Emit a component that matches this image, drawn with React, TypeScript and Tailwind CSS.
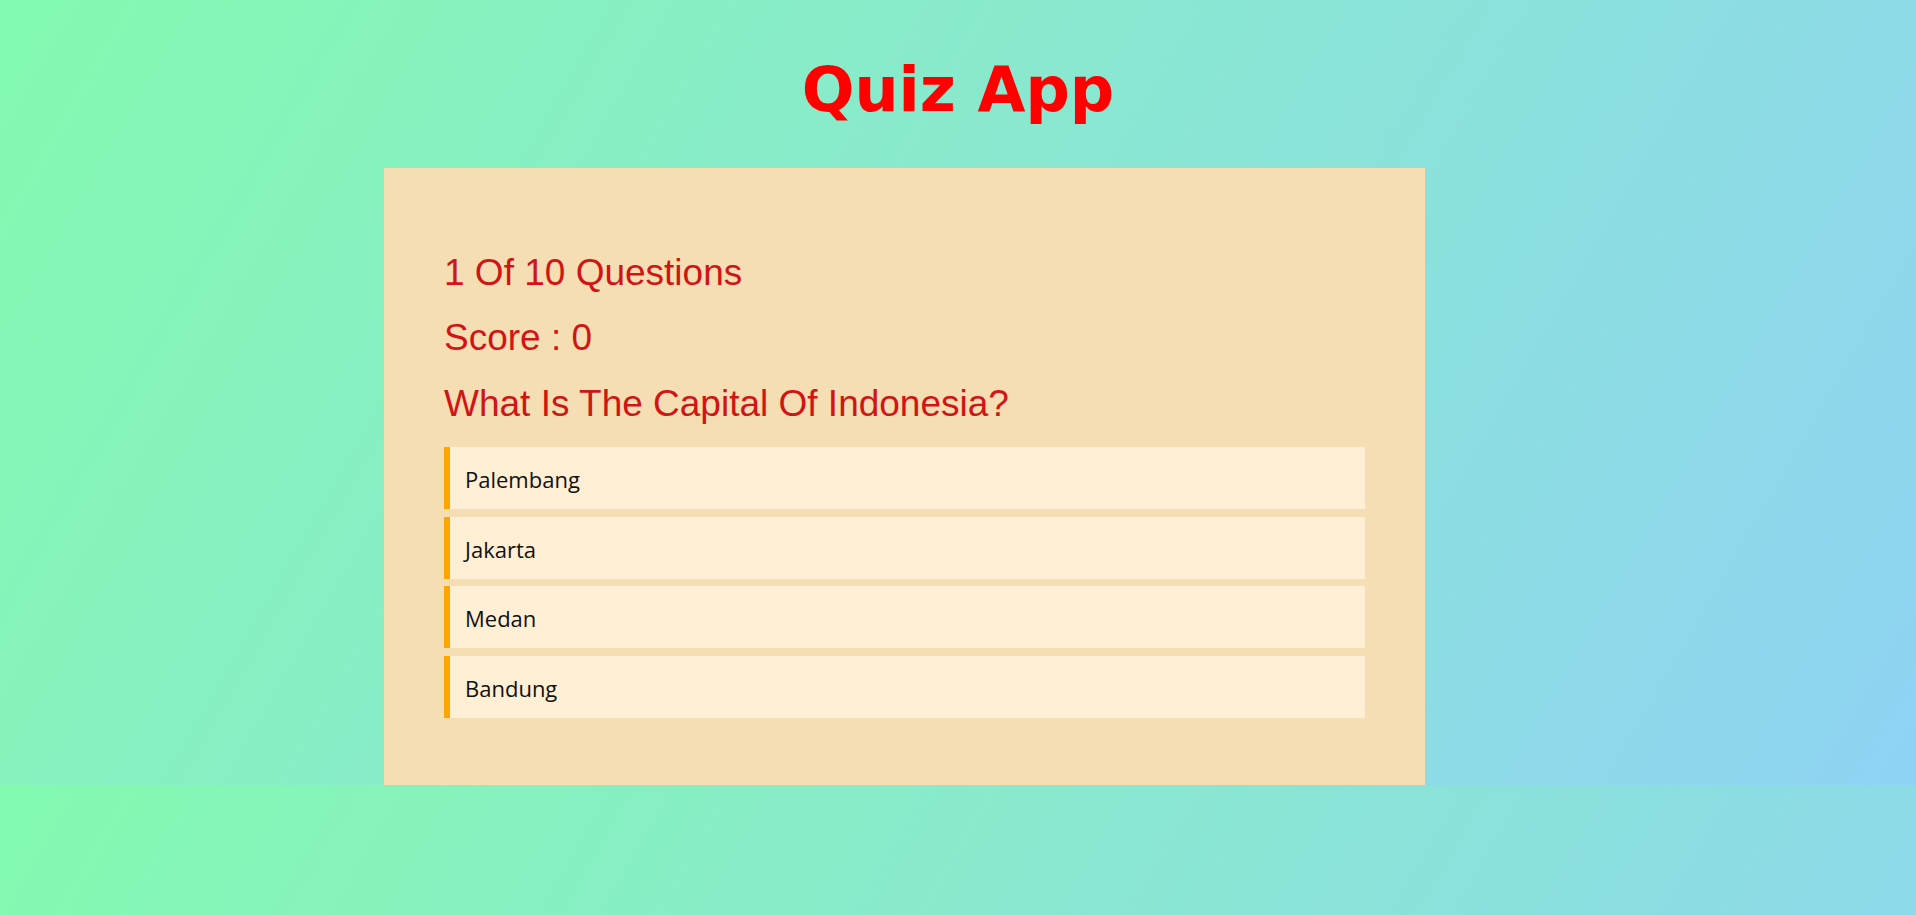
import React from "react";

const options = ["Palembang", "Jakarta", "Medan", "Bandung"];

export default function App() {
  return (
    <div className="min-h-screen bg-[linear-gradient(120deg,#84fab0_0%,#8fd3f4_100%)] bg-[length:100%_785px] bg-repeat font-['Liberation_Sans',Arial,sans-serif]">
      <h1 className="m-0 pt-[54px] pb-[42px] text-center font-['DejaVu_Sans',Verdana,sans-serif] text-[62px] font-bold leading-[72px] text-[#ff0000]">
        Quiz App
      </h1>
      <div className="ml-[384px] w-[1041px] bg-[#f5deb3] px-[60px] pt-[60px] pb-[59px]">
        <p className="mt-[24px] text-[37px] leading-[42px] text-[#d11414]">1 Of 10 Questions</p>
        <p className="mt-[23px] text-[37px] leading-[42px] text-[#d11414]">Score : 0</p>
        <p className="mt-[24px] text-[37px] leading-[42px] text-[#d11414]">What Is The Capital Of Indonesia?</p>
        <div className="mt-[22px] flex flex-col">
          {options.map((o) => (
            <div
              key={o}
              className="mb-[7.67px] flex h-[62px] items-center border-l-[6px] border-[#ffa500] bg-[#ffefd5] pl-[15px] pt-[3px] font-['Open_Sans',sans-serif] text-[22px] text-[#111111]"
            >
              {o}
            </div>
          ))}
        </div>
      </div>
    </div>
  );
}
